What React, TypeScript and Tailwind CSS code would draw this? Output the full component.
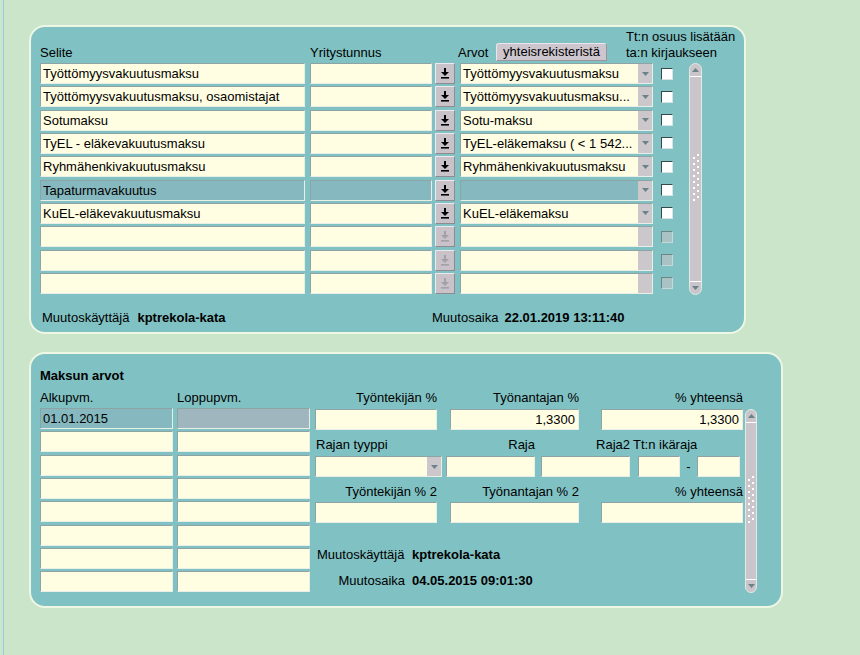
import React from "react";

type Tone = "normal" | "sel" | "gray";

function toneBg(t: Tone) {
  if (t === "sel") return "bg-[#86b8bf]";
  if (t === "gray") return "bg-[#9fb6be]";
  return "bg-[#fffde2]";
}

const fieldBorder =
  "border border-t-[#8ea3a3] border-l-[#8ea3a3] border-r-[#e9efe6] border-b-[#e9efe6]";

function Field({
  className = "",
  children,
  right = false,
  tone = "normal",
}: {
  className?: string;
  children?: React.ReactNode;
  right?: boolean;
  tone?: Tone;
}) {
  return (
    <div
      className={`h-[21px] shrink-0 ${fieldBorder} ${toneBg(tone)} text-[13px] leading-[19px] whitespace-nowrap overflow-hidden ${
        right ? "text-right pr-[3px] pl-[2px]" : "pl-[2px] pr-[2px]"
      } ${className}`}
    >
      {children}
    </div>
  );
}

function Tri({ up = false, color = "#6b8289" }: { up?: boolean; color?: string }) {
  return (
    <svg width="7" height="4" viewBox="0 0 7 4">
      <path d={up ? "M0 4h7L3.5 0z" : "M0 0h7L3.5 4z"} fill={color} />
    </svg>
  );
}

function Select({
  className = "",
  text = "",
  tone = "normal",
  arrow = true,
}: {
  className?: string;
  text?: string;
  tone?: Tone;
  arrow?: boolean;
}) {
  return (
    <div className={`h-[21px] shrink-0 flex ${fieldBorder} ${toneBg(tone)} ${className}`}>
      <div className="flex-1 min-w-0 pl-[2px] text-[13px] leading-[19px] whitespace-nowrap overflow-hidden">
        {text}
      </div>
      <div className="w-[14px] shrink-0 bg-[#cbc7cb] flex items-center justify-center">
        {arrow && <Tri />}
      </div>
    </div>
  );
}

function DlButton({ disabled = false }: { disabled?: boolean }) {
  const c = disabled ? "#a3a0a6" : "#000000";
  return (
    <div className="w-[20px] h-[21px] shrink-0 bg-[#c9c3c9] border border-t-[#ece8ec] border-l-[#ece8ec] border-r-[#8f8a90] border-b-[#8f8a90] flex items-center justify-center">
      <svg width="8" height="11" viewBox="0 0 8 11">
        <path d="M3 0h2v4h3L4 8 0 4h3z" fill={c} />
        <rect x="0" y="9" width="8" height="1.6" fill={c} />
      </svg>
    </div>
  );
}

function Check({ disabled = false }: { disabled?: boolean }) {
  return (
    <div
      className={`w-[12px] h-[12px] shrink-0 border ${
        disabled
          ? "bg-[#a9c2c3] border-t-[#6d8585] border-l-[#6d8585] border-r-[#c6d8d8] border-b-[#c6d8d8]"
          : "bg-white border-t-[#34494a] border-l-[#34494a] border-r-[#d8e4e4] border-b-[#d8e4e4]"
      }`}
    />
  );
}

function Grip() {
  const dots: React.ReactNode[] = [];
  for (let k = 0; k < 8; k++) {
    dots.push(<rect key={"a" + k} x="5" y={k * 6} width="2" height="2" fill="#ffffff" />);
    dots.push(<rect key={"b" + k} x="1" y={k * 6 + 3} width="2" height="2" fill="#ffffff" />);
  }
  return (
    <svg width="8" height="50" viewBox="0 0 8 50">
      {dots}
    </svg>
  );
}

function ScrollBar({ className = "" }: { className?: string }) {
  return (
    <div
      className={`shrink-0 flex flex-col rounded-full bg-[#cac5ca] border border-[#e4e9e4] overflow-hidden ${className}`}
    >
      <div className="h-[13px] shrink-0 flex items-center justify-center border-b border-white">
        <Tri up />
      </div>
      <div className="flex-1 flex items-center justify-center">
        <Grip />
      </div>
      <div className="h-[13px] shrink-0 flex items-center justify-center border-t border-white">
        <Tri />
      </div>
    </div>
  );
}

type Row = { selite: string; arvo: string; sel?: boolean; disabled?: boolean };

const rows: Row[] = [
  { selite: "Työttömyysvakuutusmaksu", arvo: "Työttömyysvakuutusmaksu" },
  { selite: "Työttömyysvakuutusmaksu, osaomistajat", arvo: "Työttömyysvakuutusmaksu..." },
  { selite: "Sotumaksu", arvo: "Sotu-maksu" },
  { selite: "TyEL - eläkevakuutusmaksu", arvo: "TyEL-eläkemaksu ( < 1 542..." },
  { selite: "Ryhmähenkivakuutusmaksu", arvo: "Ryhmähenkivakuutusmaksu" },
  { selite: "Tapaturmavakuutus", arvo: "", sel: true },
  { selite: "KuEL-eläkevakuutusmaksu", arvo: "KuEL-eläkemaksu" },
  { selite: "", arvo: "", disabled: true },
  { selite: "", arvo: "", disabled: true },
  { selite: "", arvo: "", disabled: true },
];

export default function App() {
  return (
    <div className="flex w-[860px] h-[655px] bg-[#cbe5ca] font-['Liberation_Sans',Arial,sans-serif] text-[13px] text-black overflow-hidden">
      <div className="w-[3px] shrink-0" />
      <div className="w-px shrink-0 bg-[#97cde4]" />
      <div className="flex flex-col pl-[25px] pt-[25px]">
        {/* Top panel */}
        <div className="w-[717px] h-[309px] rounded-[16px] border-2 border-[#eef7e4] bg-[#80c1c3] pl-[9px] flex flex-col">
          <div className="h-[36px] shrink-0 flex items-end pb-[2px] leading-[16px]">
            <div className="w-[270px] shrink-0">Selite</div>
            <div className="w-[148px] shrink-0">Yritystunnus</div>
            <div className="w-[38px] shrink-0">Arvot</div>
            <div className="w-[111px] h-[18px] shrink-0 bg-[#cdc6ce] border border-t-[#ebe6eb] border-l-[#ebe6eb] border-r-[#9a949b] border-b-[#9a949b] rounded-t-[3px] flex items-center justify-center leading-[16px]">
              yhteisrekisteristä
            </div>
            <div className="w-[19px] shrink-0" />
            <div className="whitespace-nowrap">
              <div>Tt:n osuus lisätään</div>
              <div>ta:n kirjaukseen</div>
            </div>
          </div>
          <div className="flex">
            <div className="flex flex-col gap-[2.33px]">
              {rows.map((r, i) => (
                <div key={i} className="flex items-center">
                  <Field className="w-[265px]" tone={r.sel ? "sel" : "normal"}>
                    {r.selite}
                  </Field>
                  <Field className="w-[122px] ml-[5px]" tone={r.sel ? "sel" : "normal"} />
                  <div className="ml-[3px]">
                    <DlButton disabled={r.disabled} />
                  </div>
                  <Select
                    className="w-[193px] ml-[5px]"
                    text={r.arvo}
                    tone={r.sel ? "sel" : "normal"}
                    arrow={!r.disabled}
                  />
                  <div className="ml-[8px]">
                    <Check disabled={r.disabled} />
                  </div>
                </div>
              ))}
            </div>
            <ScrollBar className="ml-[16px] w-[13px] h-[232px]" />
          </div>
          <div className="mt-[15px] flex leading-[16px] whitespace-nowrap">
            <div className="w-[392px] shrink-0 pl-[2px] flex">
              <span>Muutoskäyttäjä</span>
              <span className="ml-[8px] font-bold">kptrekola-kata</span>
            </div>
            <span>Muutosaika</span>
            <span className="ml-[6px] font-bold">22.01.2019 13:11:40</span>
          </div>
        </div>

        {/* Bottom panel */}
        <div className="mt-[18px] w-[754px] h-[256px] rounded-[16px] border-2 border-[#eef7e4] bg-[#80c1c3] pl-[9px] pt-[14px] flex flex-col">
          <div className="font-bold leading-[16px]">Maksun arvot</div>
          <div className="mt-[6px] flex items-start">
            <div className="flex flex-col">
              <div className="flex leading-[16px] h-[16px]">
                <div className="w-[137px]">Alkupvm.</div>
                <div>Loppupvm.</div>
              </div>
              <div className="mt-[2px] flex flex-col gap-[2.33px]">
                {Array.from({ length: 8 }).map((_, i) => (
                  <div key={i} className="flex">
                    <Field className="w-[133px]" tone={i === 0 ? "sel" : "normal"}>
                      {i === 0 ? "01.01.2015" : ""}
                    </Field>
                    <Field className="w-[133px] ml-[4px]" tone={i === 0 ? "gray" : "normal"} />
                  </div>
                ))}
              </div>
            </div>
            <div className="ml-[4px] w-[429px] flex flex-col whitespace-nowrap">
              <div className="flex leading-[16px] h-[16px]">
                <div className="w-[123px] text-right">Työntekijän %</div>
                <div className="ml-[12px] w-[130px] text-right">Työnantajan %</div>
                <div className="ml-[21px] w-[143px] text-right">% yhteensä</div>
              </div>
              <div className="mt-[3px] flex">
                <Field className="ml-[1px] w-[122px]" right />
                <Field className="ml-[13px] w-[129px]" right>
                  1,3300
                </Field>
                <Field className="ml-[22px] w-[142px]" right>
                  1,3300
                </Field>
              </div>
              <div className="mt-[7px] flex leading-[16px] h-[16px]">
                <div className="w-[131px] pl-[2px]">Rajan tyyppi</div>
                <div className="w-[90px] text-right">Raja</div>
                <div className="w-[95px] text-right">Raja2</div>
                <div className="pl-[3px]">Tt:n ikäraja</div>
              </div>
              <div className="mt-[3px] flex">
                <Select className="ml-[1px] w-[127px]" />
                <Field className="ml-[4px] w-[89px]" />
                <Field className="ml-[6px] w-[89px]" />
                <Field className="ml-[8px] w-[42px]" />
                <div className="w-[17px] text-center leading-[21px]">-</div>
                <Field className="w-[43px]" />
              </div>
              <div className="mt-[7px] flex leading-[16px] h-[16px]">
                <div className="w-[123px] text-right">Työntekijän % 2</div>
                <div className="ml-[12px] w-[130px] text-right">Työnantajan % 2</div>
                <div className="ml-[21px] w-[143px] text-right">% yhteensä</div>
              </div>
              <div className="mt-[2px] flex">
                <Field className="ml-[1px] w-[122px]" right />
                <Field className="ml-[13px] w-[129px]" right />
                <Field className="ml-[22px] w-[142px]" right />
              </div>
              <div className="mt-[24px] flex leading-[16px]">
                <div className="w-[98px] pl-[3px]">Muutoskäyttäjä</div>
                <div className="font-bold">kptrekola-kata</div>
              </div>
              <div className="mt-[10px] flex leading-[16px]">
                <div className="w-[98px] text-right pr-[7px]">Muutosaika</div>
                <div className="font-bold">04.05.2015 09:01:30</div>
              </div>
            </div>
            <ScrollBar className="ml-[2px] mt-[19px] w-[12px] h-[184px]" />
          </div>
        </div>
      </div>
    </div>
  );
}
